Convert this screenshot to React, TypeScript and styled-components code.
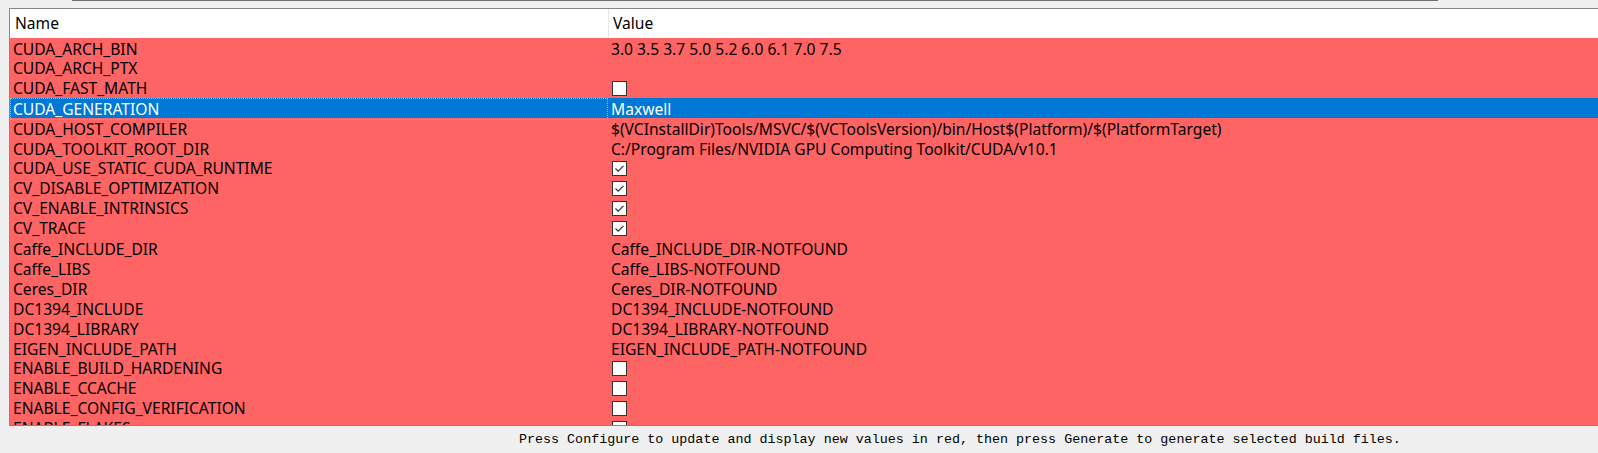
import React from "react";
import styled, { createGlobalStyle } from "styled-components";

const GlobalStyle = createGlobalStyle`
  html, body { margin: 0; padding: 0; background: #f0f0f0; overflow: hidden; }
  body { width: 1598px; height: 453px; }
`;

const Page = styled.div`
  width: 1598px;
  height: 453px;
  display: flex;
  flex-direction: column;
  background: #f0f0f0;
  font-family: "Noto Sans", "Open Sans", sans-serif;
  font-size: 15.6px;
  color: #000;
`;

const TopStrip = styled.div`
  height: 8px;
  flex: none;
  padding-left: 72px;
`;

const TopEdge = styled.div`
  width: 1366px;
  height: 1px;
  background: #6e6e6e;
`;

const Table = styled.div`
  margin-left: 9px;
  height: 416px;
  flex: none;
  border-top: 1px solid #828790;
  border-left: 1px solid #828790;
  border-bottom: 1px solid #828790;
  display: flex;
  flex-direction: column;
  overflow: hidden;
  background: #fff;
`;

const HeaderRow = styled.div`
  display: grid;
  grid-template-columns: 598px 1fr;
  height: 29px;
  flex: none;
  background: #fff;
`;

const HeaderCell = styled.div<{ $divider?: boolean }>`
  display: flex;
  align-items: center;
  padding-left: ${(p) => (p.$divider ? "4px" : "5px")};
  border-left: ${(p) => (p.$divider ? "1px solid #e5e5e5" : "none")};
  padding-bottom: 1px;
`;

const Body = styled.div`
  flex: 1;
  overflow: hidden;
  background: #ff6464;
`;

const Row = styled.div<{ $selected?: boolean }>`
  display: grid;
  grid-template-columns: 598px 1fr;
  height: 20px;
  background: ${(p) => (p.$selected ? "#0078d7" : "#ff6464")};
  color: ${(p) => (p.$selected ? "#fff" : "#000")};
`;

const NameCell = styled.div<{ $focus?: boolean }>`
  display: flex;
  align-items: center;
  padding-left: 3px;
  white-space: nowrap;
  overflow: hidden;
  outline: ${(p) => (p.$focus ? "1px dotted #f5a53a" : "none")};
  outline-offset: -1px;
`;

const ValueCell = styled.div`
  display: flex;
  align-items: center;
  padding-left: 3px;
  white-space: nowrap;
`;

const CheckBox = styled.div`
  width: 13px;
  height: 13px;
  margin-left: 1px;
  border: 1px solid #333;
  background: #fff;
  display: flex;
  align-items: center;
  justify-content: center;
`;

const StatusBar = styled.div`
  flex: 1;
  display: flex;
  align-items: center;
  padding-left: 519px;
  font-family: "Liberation Mono", "DejaVu Sans Mono", monospace;
  font-size: 13.37px;
  white-space: nowrap;
  color: #000;
`;

type Entry = { name: string; value?: string; check?: boolean };

const rows: Entry[] = [
  { name: "CUDA_ARCH_BIN", value: "3.0 3.5 3.7 5.0 5.2 6.0 6.1 7.0 7.5" },
  { name: "CUDA_ARCH_PTX", value: "" },
  { name: "CUDA_FAST_MATH", check: false },
  { name: "CUDA_GENERATION", value: "Maxwell" },
  {
    name: "CUDA_HOST_COMPILER",
    value: "$(VCInstallDir)Tools/MSVC/$(VCToolsVersion)/bin/Host$(Platform)/$(PlatformTarget)",
  },
  {
    name: "CUDA_TOOLKIT_ROOT_DIR",
    value: "C:/Program Files/NVIDIA GPU Computing Toolkit/CUDA/v10.1",
  },
  { name: "CUDA_USE_STATIC_CUDA_RUNTIME", check: true },
  { name: "CV_DISABLE_OPTIMIZATION", check: true },
  { name: "CV_ENABLE_INTRINSICS", check: true },
  { name: "CV_TRACE", check: true },
  { name: "Caffe_INCLUDE_DIR", value: "Caffe_INCLUDE_DIR-NOTFOUND" },
  { name: "Caffe_LIBS", value: "Caffe_LIBS-NOTFOUND" },
  { name: "Ceres_DIR", value: "Ceres_DIR-NOTFOUND" },
  { name: "DC1394_INCLUDE", value: "DC1394_INCLUDE-NOTFOUND" },
  { name: "DC1394_LIBRARY", value: "DC1394_LIBRARY-NOTFOUND" },
  { name: "EIGEN_INCLUDE_PATH", value: "EIGEN_INCLUDE_PATH-NOTFOUND" },
  { name: "ENABLE_BUILD_HARDENING", check: false },
  { name: "ENABLE_CCACHE", check: false },
  { name: "ENABLE_CONFIG_VERIFICATION", check: false },
  { name: "ENABLE_FLAKES", check: false },
];

const Check = () => (
  <svg width="11" height="11" viewBox="0 0 11 11">
    <path d="M1.5 5.5 L4.2 8.2 L9.5 2.8" fill="none" stroke="#333" strokeWidth="1.2" />
  </svg>
);

export default function App() {
  return (
    <>
      <GlobalStyle />
      <Page>
        <TopStrip>
          <TopEdge />
        </TopStrip>
        <Table>
          <HeaderRow>
            <HeaderCell>Name</HeaderCell>
            <HeaderCell $divider>Value</HeaderCell>
          </HeaderRow>
          <Body>
            {rows.map((r, i) => {
              const selected = r.name === "CUDA_GENERATION";
              return (
                <Row key={i} $selected={selected}>
                  <NameCell $focus={selected}>{r.name}</NameCell>
                  <ValueCell>
                    {r.check !== undefined ? (
                      <CheckBox>{r.check ? <Check /> : null}</CheckBox>
                    ) : (
                      r.value
                    )}
                  </ValueCell>
                </Row>
              );
            })}
          </Body>
        </Table>
        <StatusBar>
          Press Configure to update and display new values in red, then press Generate to generate selected build files.
        </StatusBar>
      </Page>
    </>
  );
}
